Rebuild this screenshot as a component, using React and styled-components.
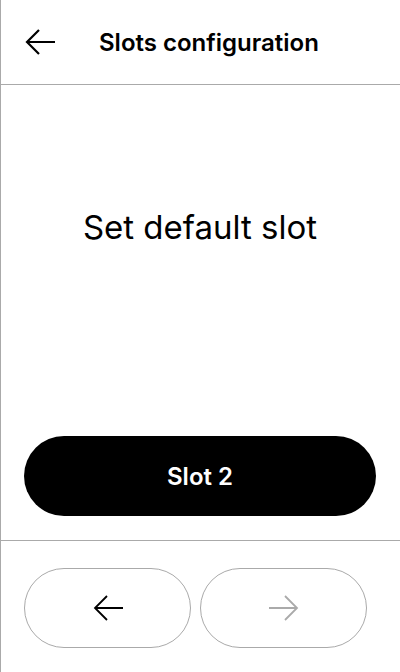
import React from 'react';
import styled, { createGlobalStyle } from 'styled-components';

const GlobalStyle = createGlobalStyle`
  html, body {
    margin: 0;
    padding: 0;
    background: #ffffff;
  }
  body {
    font-family: Inter, "Noto Sans", sans-serif;
    color: #000000;
  }
`;

const Screen = styled.div`
  width: 400px;
  height: 672px;
  box-sizing: border-box;
  border-left: 1px solid #aaaaaa;
  display: flex;
  flex-direction: column;
  overflow: hidden;
`;

const Header = styled.header`
  height: 85px;
  box-sizing: border-box;
  border-bottom: 1px solid #aaaaaa;
  display: flex;
  align-items: center;
  padding: 0 0 0 23px;
  gap: 43px;
`;

const IconButton = styled.button`
  border: 0;
  background: transparent;
  padding: 0;
  width: 32px;
  height: 28px;
  display: flex;
  align-items: center;
  justify-content: center;
  cursor: pointer;
`;

const Title = styled.h1`
  margin: 0;
  font-size: 24px;
  font-weight: 600;
  letter-spacing: 0;
`;

const Body = styled.main`
  flex: 1;
  display: flex;
  flex-direction: column;
  padding: 0 24px 24px 23px;
  border-bottom: 1px solid #aaaaaa;
`;

const Message = styled.p`
  margin: 0;
  padding-top: 122px;
  text-align: center;
  font-size: 33px;
  line-height: 40px;
  font-weight: 400;
`;

const PrimaryButton = styled.button`
  margin-top: auto;
  height: 80px;
  width: 100%;
  border: 0;
  border-radius: 40px;
  background: #000000;
  color: #ffffff;
  font-family: inherit;
  font-size: 24px;
  font-weight: 600;
  cursor: pointer;
`;

const Footer = styled.footer`
  height: 131px;
  box-sizing: border-box;
  display: flex;
  gap: 9px;
  padding: 27px 0 0 23px;
`;

const NavButton = styled.button`
  width: 167px;
  height: 80px;
  box-sizing: border-box;
  border: 1px solid #aaaaaa;
  border-radius: 40px;
  background: #ffffff;
  display: flex;
  align-items: center;
  justify-content: center;
  color: ${p => (p.disabled ? '#aaaaaa' : '#000000')};
  cursor: ${p => (p.disabled ? 'default' : 'pointer')};
`;

function Arrow({ dir = 'left', weight = 2 }) {
  const d = dir === 'left'
    ? 'M31 14 H3 M15 2 L3 14 L15 26'
    : 'M1 14 H29 M17 2 L29 14 L17 26';
  return (
    <svg width="32" height="28" viewBox="0 0 32 28" fill="none">
      <path d={d} stroke="currentColor" strokeWidth={weight} strokeLinecap="butt" strokeLinejoin="miter" />
    </svg>
  );
}

export default function App() {
  return (
    <>
      <GlobalStyle />
      <Screen>
        <Header>
          <IconButton aria-label="Back">
            <Arrow dir="left" weight={2.2} />
          </IconButton>
          <Title>Slots configuration</Title>
        </Header>
        <Body>
          <Message>Set default slot</Message>
          <PrimaryButton>Slot 2</PrimaryButton>
        </Body>
        <Footer>
          <NavButton aria-label="Previous">
            <Arrow dir="left" weight={1.8} />
          </NavButton>
          <NavButton aria-label="Next" disabled>
            <Arrow dir="right" weight={1.8} />
          </NavButton>
        </Footer>
      </Screen>
    </>
  );
}
